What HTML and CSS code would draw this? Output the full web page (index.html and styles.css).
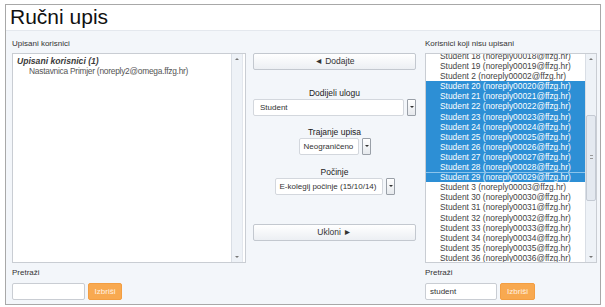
FILE: index.html
```html
<!DOCTYPE html>
<html lang="hr">
<head>
<meta charset="utf-8">
<title>Ručni upis</title>
<link rel="stylesheet" href="styles.css">
</head>
<body>
<div class="frame">
  <div class="title">Ručni upis</div>
  <div class="content">
    <div class="col col-left">
      <div class="lbl">Upisani korisnici</div>
      <div class="listbox lb-left">
        <div class="items">
          <div class="grp">Upisani korisnici (1)</div>
          <div class="opt ind">Nastavnica Primjer (noreply2@omega.ffzg.hr)</div>
        </div>
        <div class="sbar">
          <span class="arr up"></span>
          <span class="arr down"></span>
        </div>
      </div>
      <div class="lbl search-lbl">Pretraži</div>
      <div class="search">
        <div class="inp"></div>
        <div class="btn-o">Izbriši</div>
      </div>
    </div>

    <div class="col col-mid">
      <div class="btn">&#9668; Dodajte</div>
      <div class="field f-role">
        <div class="flbl">Dodijeli ulogu</div>
        <div class="sel sel-wide"><span class="sv">Student</span><span class="dd"></span></div>
      </div>
      <div class="field f-dur">
        <div class="flbl">Trajanje upisa</div>
        <div class="sel sel-dur"><span class="sv">Neograničeno</span><span class="dd"></span></div>
      </div>
      <div class="field f-start">
        <div class="flbl">Počinje</div>
        <div class="sel sel-start"><span class="sv">E-kolegij počinje (15/10/14)</span><span class="dd"></span></div>
      </div>
      <div class="btn btn-remove">Ukloni &#9658;</div>
    </div>

    <div class="col col-right">
      <div class="lbl">Korisnici koji nisu upisani</div>
      <div class="listbox lb-right">
        <div class="items shifted">
          <div class="opt">Student 18 (noreply00018@ffzg.hr)</div>
          <div class="opt">Student 19 (noreply00019@ffzg.hr)</div>
          <div class="opt">Student 2 (noreply00002@ffzg.hr)</div>
          <div class="opt on">Student 20 (noreply00020@ffzg.hr)</div>
          <div class="opt on">Student 21 (noreply00021@ffzg.hr)</div>
          <div class="opt on">Student 22 (noreply00022@ffzg.hr)</div>
          <div class="opt on">Student 23 (noreply00023@ffzg.hr)</div>
          <div class="opt on">Student 24 (noreply00024@ffzg.hr)</div>
          <div class="opt on">Student 25 (noreply00025@ffzg.hr)</div>
          <div class="opt on">Student 26 (noreply00026@ffzg.hr)</div>
          <div class="opt on">Student 27 (noreply00027@ffzg.hr)</div>
          <div class="opt on">Student 28 (noreply00028@ffzg.hr)</div>
          <div class="opt on focus">Student 29 (noreply00029@ffzg.hr)</div>
          <div class="opt">Student 3 (noreply00003@ffzg.hr)</div>
          <div class="opt">Student 30 (noreply00030@ffzg.hr)</div>
          <div class="opt">Student 31 (noreply00031@ffzg.hr)</div>
          <div class="opt">Student 32 (noreply00032@ffzg.hr)</div>
          <div class="opt">Student 33 (noreply00033@ffzg.hr)</div>
          <div class="opt">Student 34 (noreply00034@ffzg.hr)</div>
          <div class="opt">Student 35 (noreply00035@ffzg.hr)</div>
          <div class="opt">Student 36 (noreply00036@ffzg.hr)</div>
        </div>
        <div class="sbar">
          <span class="arr up"></span>
          <span class="thumb"><span class="grip"></span></span>
          <span class="arr down"></span>
        </div>
      </div>
      <div class="lbl search-lbl">Pretraži</div>
      <div class="search">
        <div class="inp"><span class="iv">student</span></div>
        <div class="btn-o">Izbriši</div>
      </div>
    </div>
  </div>
</div>
</body>
</html>
```

FILE: styles.css
```css
html, body {
  margin: 0;
  padding: 0;
  background: #ffffff;
}
body {
  font-family: "Liberation Sans", Arial, sans-serif;
  color: #333333;
}
.frame {
  margin: 4px 0 0 5px;
  width: 596px;
  height: 301px;
  box-sizing: border-box;
  border: 1px solid #a8a8a8;
  display: flex;
  flex-direction: column;
}
.title {
  height: 25px;
  font-size: 21px;
  line-height: 24px;
  padding-left: 4px;
  color: #111111;
  background: #ffffff;
  border-bottom: 1px solid #e4e8ee;
  flex: none;
}
.content {
  flex: 1;
  background: #f3f6fa;
  display: flex;
  padding: 0 2px 0 6px;
}
.col {
  display: flex;
  flex-direction: column;
}
.col-left { width: 234px; margin-right: 7px; }
.col-mid { width: 163px; margin-right: 9px; padding-top: 22px; }
.col-right { width: 172px; }

.lbl {
  font-size: 8px;
  line-height: 10px;
  height: 10px;
  margin-top: 8px;
  margin-bottom: 4px;
  color: #333333;
}
.search-lbl {
  margin-top: 5px;
  margin-bottom: 5px;
}
.listbox {
  height: 210px;
  box-sizing: border-box;
  border: 1px solid #c9cdd3;
  background: #ffffff;
  display: flex;
  overflow: hidden;
}
.items {
  flex: 1;
  overflow: hidden;
  padding-top: 2px;
  font-size: 8.4px;
  line-height: 10.1px;
}
.items.shifted {
  padding-top: 0;
  margin-top: -3px;
}
.grp {
  font-weight: bold;
  font-style: italic;
  color: #3a3a3a;
  padding-left: 4px;
  font-size: 8.6px;
}
.opt {
  padding-left: 14px;
  color: #444444;
  white-space: nowrap;
}
.opt.ind {
  padding-left: 16px;
  letter-spacing: -0.25px;
  color: #555555;
}
.opt.on {
  background: #2d8fd5;
  color: #ffffff;
}
.opt.focus {
  border-top: 1px solid #8cc4ec;
  line-height: 9.1px;
}
.sbar {
  width: 10px;
  flex: none;
  background: #eef2f7;
  border-left: 1px solid #d9dee5;
  position: relative;
}
.lb-left .sbar { margin-right: 2px; border-right: 1px solid #e2e6ec; }
.arr {
  position: absolute;
  left: 3px;
  width: 0;
  height: 0;
  border-left: 2px solid transparent;
  border-right: 2px solid transparent;
}
.arr.up {
  top: 4px;
  border-bottom: 2px solid #777777;
}
.arr.down {
  bottom: 4px;
  border-top: 2px solid #777777;
}
.thumb {
  position: absolute;
  left: 0;
  top: 61px;
  width: 10px;
  height: 86px;
  box-sizing: border-box;
  border: 1px solid #c4cad3;
  border-radius: 2px;
  background: #e4e9f0;
}
.grip {
  position: absolute;
  left: 3px;
  top: 39px;
  width: 3px;
  height: 4px;
  border-top: 1px solid #999;
  border-bottom: 1px solid #999;
  box-sizing: border-box;
}

.search {
  display: flex;
  gap: 3px;
  height: 17px;
}
.inp {
  width: 73px;
  height: 17px;
  box-sizing: border-box;
  border: 1px solid #c9cdd3;
  border-radius: 2px;
  background: #ffffff;
  font-size: 8px;
  line-height: 15px;
  padding-left: 4px;
  color: #333333;
}
.col-right .inp { width: 72px; }
.btn-o {
  width: 34px;
  height: 17px;
  box-sizing: border-box;
  border-radius: 2px;
  background: #f8a950;
  border: 1px solid #f39e42;
  color: #fff1e0;
  font-size: 8px;
  line-height: 15px;
  text-align: center;
}
.col-right .btn-o { width: 35px; }

.btn {
  height: 17px;
  flex: none;
  box-sizing: border-box;
  border: 1px solid #c3c8cf;
  border-radius: 2px;
  background: linear-gradient(#ffffff, #eceff3);
  font-size: 8.5px;
  line-height: 15px;
  text-align: center;
  color: #333333;
}
.btn-remove { margin-top: 29px; }
.field {
  display: flex;
  flex-direction: column;
  align-items: center;
}
.flbl {
  font-size: 8.5px;
  line-height: 10px;
  margin-bottom: 1px;
  color: #222222;
}
.f-role { margin-top: 18px; }
.f-dur { margin-top: 11px; }
.f-start { margin-top: 12px; }
.sel {
  height: 17px;
  display: flex;
  align-items: stretch;
  gap: 3px;
}
.sv {
  flex: 1;
  box-sizing: border-box;
  border: 1px solid #d3d7dd;
  border-radius: 2px;
  background: #ffffff;
  font-size: 8px;
  line-height: 15px;
  padding: 0 4px;
  color: #333333;
  white-space: nowrap;
}
.sel-wide { width: 163px; }
.sel-wide .sv { padding-left: 6px; }
.sel-dur { width: 72px; }
.sel-start { width: 120px; }
.dd {
  width: 9px;
  flex: none;
  box-sizing: border-box;
  border: 1px solid #9aa0a8;
  border-radius: 1px;
  background: linear-gradient(#ffffff, #e6e9ed);
  position: relative;
}
.dd::after {
  content: "";
  position: absolute;
  left: 2px;
  top: 6px;
  border-left: 2px solid transparent;
  border-right: 2px solid transparent;
  border-top: 2px solid #333333;
}
```
